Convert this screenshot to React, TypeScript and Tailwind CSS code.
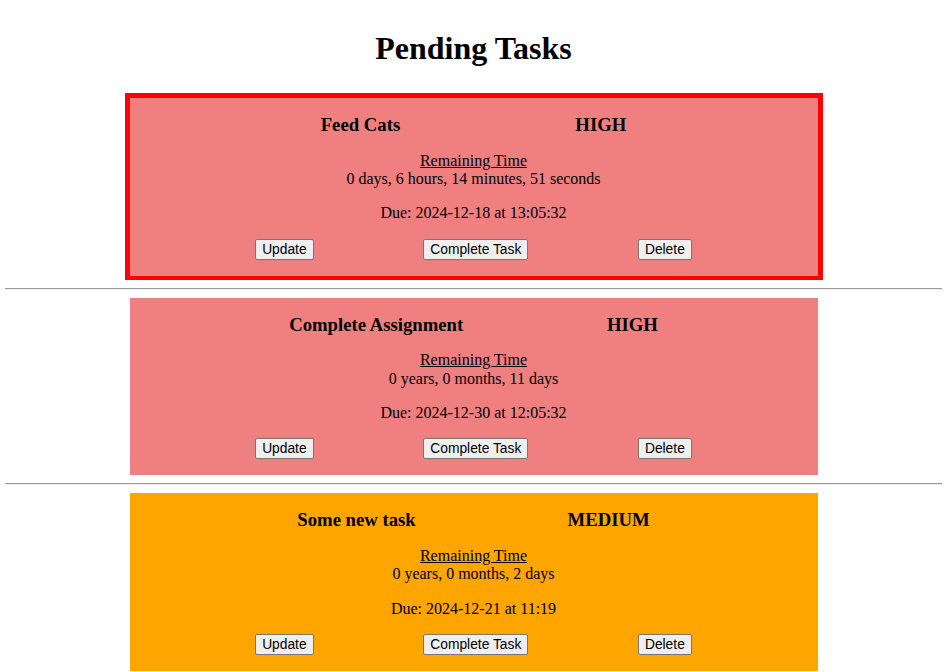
import React from 'react';

interface Task {
  title: string;
  priority: 'HIGH' | 'MEDIUM';
  remaining: string;
  due: string;
  overdueSoon?: boolean;
}

const TASKS: Task[] = [
  {
    title: 'Feed Cats',
    priority: 'HIGH',
    remaining: '0 days, 6 hours, 14 minutes, 51 seconds',
    due: '2024-12-18 at 13:05:32',
    overdueSoon: true,
  },
  {
    title: 'Complete Assignment',
    priority: 'HIGH',
    remaining: '0 years, 0 months, 11 days',
    due: '2024-12-30 at 12:05:32',
  },
  {
    title: 'Some new task',
    priority: 'MEDIUM',
    remaining: '0 years, 0 months, 2 days',
    due: '2024-12-21 at 11:19',
  },
];

const PRIORITY_BG: Record<string, string> = {
  HIGH: 'bg-[#f08080]',
  MEDIUM: 'bg-[#ffa500]',
};

function Btn({ children }: { children: React.ReactNode }) {
  return (
    <button className="h-[21px] px-[6px] bg-[#efefef] border border-[#767676] rounded-[2px] text-[13.8px] leading-[15px] text-black font-['Liberation_Sans',Arial,sans-serif]">
      {children}
    </button>
  );
}

function TaskCard({ task }: { task: Task }) {
  const bg = PRIORITY_BG[task.priority];
  return (
    <div
      className={`mx-auto p-4 text-center ${bg} ${
        task.overdueSoon
          ? 'w-[698px] border-[5px] border-b-4 border-[#ff0000]'
          : 'w-[688px]'
      }`}
    >
      {/* title + priority */}
      <div className="flex justify-evenly text-[18.72px] font-bold leading-[21.5px]">
        <span>{task.title}</span>
        <span>{task.priority}</span>
      </div>
      <div className="mt-4 text-base leading-[18.4px]">
        <span className="underline">Remaining Time</span>
        <br />
        {task.remaining}
      </div>
      <p className="mt-4 text-base leading-[18.4px]">Due: {task.due}</p>
      <div className="mt-4 flex justify-evenly">
        <Btn>Update</Btn>
        <Btn>Complete Task</Btn>
        <Btn>Delete</Btn>
      </div>
    </div>
  );
}

export default function App() {
  return (
    <div className="min-h-screen bg-white text-black font-['Liberation_Serif','Times_New_Roman',serif] pt-[30px]">
      <h1 className="text-center text-[32px] font-bold leading-[37px] mb-[26px] ml-[5px] w-[937px]">
        Pending Tasks
      </h1>
      <div className="ml-[5px] w-[937px]">
        {TASKS.map((task, i) => (
          <div key={task.title}>
            {i > 0 && (
              <div className="my-2 h-[2px] border-t border-t-[#9a9a9a] border-b border-b-[#eeeeee]" />
            )}
            <TaskCard task={task} />
          </div>
        ))}
      </div>
    </div>
  );
}
